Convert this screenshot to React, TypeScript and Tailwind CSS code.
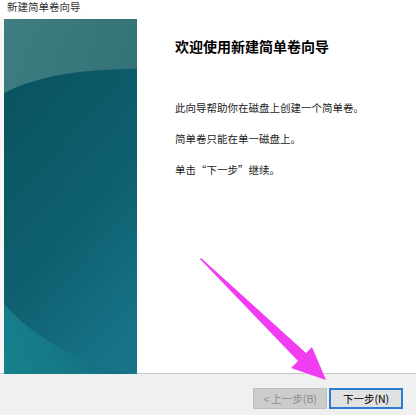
import React from "react";

const font = { fontFamily: '"Noto Sans CJK SC", "Liberation Sans", sans-serif' };

function SidePanel() {
	return (
		<svg width="133" height="355" viewBox="0 0 133 355" className="block">
			<defs>
				<linearGradient id="top" x1="0" y1="0" x2="1" y2="1">
					<stop offset="0" stopColor="#3e7d80" />
					<stop offset="1" stopColor="#2b6b72" />
				</linearGradient>
				<linearGradient id="body" x1="0.2" y1="0" x2="0.7" y2="1">
					<stop offset="0" stopColor="#0a5461" />
					<stop offset="0.55" stopColor="#0e606f" />
					<stop offset="1" stopColor="#177388" />
				</linearGradient>
				<linearGradient id="bottom" x1="0" y1="1" x2="1" y2="0.6">
					<stop offset="0" stopColor="#16818c" />
					<stop offset="1" stopColor="#146a7c" />
				</linearGradient>
			</defs>
			<rect width="133" height="355" fill="url(#top)" />
			<rect y="200" width="133" height="155" fill="url(#bottom)" />
			<path d="M0,74 C35,56 80,50 133,50 L133,355 L125,355 C80,345 30,320 0,285 Z" fill="url(#body)" />
		</svg>
	);
}

export default function App() {
	return (
		<div className="relative w-[416px] h-[415px] bg-[#f0f0f0] overflow-hidden" style={font}>
			<div className="h-[19px] bg-white pl-[7px] text-[10.5px] leading-[14px] text-[#333]">
				新建简单卷向导
			</div>
			<div className="flex h-[355px] border-b border-[#c8c8c8]">
				<div className="w-[4px] bg-[#f6f6f6]" />
				<div className="w-[133px]">
					<SidePanel />
				</div>
				<div className="flex-1 bg-white pl-[38px] pt-[17px] text-black">
					<h1 className="text-[14px] font-bold leading-[20px]">欢迎使用新建简单卷向导</h1>
					<div className="mt-[44px] flex flex-col gap-[16px] text-[10.5px] leading-[15px] text-[#222]">
						<p>此向导帮助你在磁盘上创建一个简单卷。</p>
						<p>简单卷只能在单一磁盘上。</p>
						<p>单击“下一步”继续。</p>
					</div>
				</div>
			</div>
			<div className="flex justify-end gap-[2px] pr-[13px] pt-[14px]">
				<button className="w-[74px] h-[21px] bg-[#cccccc] border border-[#bfbfbf] text-[10.5px] text-[#8a8a8a]">
					&lt; 上一步(B)
				</button>
				<button className="w-[74px] h-[21px] bg-[#e1e1e1] border-2 border-[#2b7cd3] text-[10.5px] text-black">
					下一步(N)
				</button>
			</div>
			<svg className="absolute left-0 top-0 pointer-events-none" width="416" height="415">
				<polygon
					points="200,259 201,258 306,353 312,347 326,380 291,368 298,361"
					fill="#f23cf2"
				/>
			</svg>
		</div>
	);
}
